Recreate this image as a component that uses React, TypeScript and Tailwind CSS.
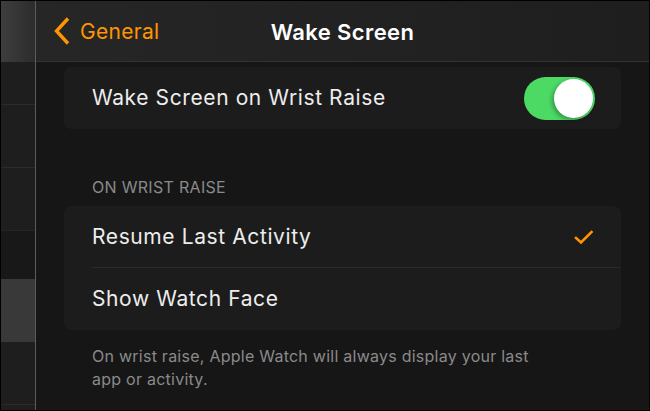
import React from "react";

function Toggle() {
    return (
        <div className="relative flex h-[43px] w-[71px] items-center justify-end rounded-full bg-[#4cd964] px-[2px]">
            <div className="h-[39px] w-[39px] rounded-full bg-white shadow-[-2px_2px_4px_rgba(0,0,0,0.3)]"/>
        </div>
    );
}

function Check() {
    return (
        <svg width="20" height="16" viewBox="0 0 20 16" fill="none">
            <path d="M2 9 L7 13.5 L17.5 3" stroke="#ff9500" strokeWidth="2.6" strokeLinecap="square"/>
        </svg>
    );
}

export default function App() {
    const sidebarRows = [
        "h-[43px] bg-[#1e1e1e] border-b border-[#2b2b2b]",
        "h-[63px] bg-[#1e1e1e] border-b border-[#2b2b2b]",
        "h-[63px] bg-[#1e1e1e] border-b border-[#252525]",
        "h-[48px] bg-[#181818]",
        "h-[63px] bg-[#393939]",
        "h-[63px] bg-[#1e1e1e] border-b border-[#2b2b2b]",
    ];

    return (
        <div className="h-[411px] w-[650px] bg-black pl-px pt-px" style={{fontFamily: "Inter, 'Open Sans', sans-serif"}}>
            <div className="flex h-[409px] w-[648px] overflow-hidden">
                <div className="flex w-[35px] flex-col border-r border-[#5c5c5c]">
                    <div className="h-[61px] bg-gradient-to-r from-[#3e3e3e] to-[#2c2c2c]"/>
                    {sidebarRows.map((c, i) => (
                        <div key={i} className={c}/>
                    ))}
                    <div className="flex-1 bg-[#1e1e1e]"/>
                </div>

                <div className="flex flex-1 flex-col bg-[#161616]">
                    <div className="relative flex h-[61px] items-center justify-center border-b border-[#333] bg-gradient-to-r from-[#262626] to-[#1e1e1e] pt-[3px]">
                        <div className="absolute left-[17px] top-0 flex h-full items-center gap-[9px] pt-[3px] text-[21px] tracking-[0.3px] text-[#ff9500]">
                            <svg width="18" height="30" viewBox="0 0 18 30" fill="none" className="-mt-[3px]">
                                <path d="M15 2.5 L3.5 15 L15 27.5" stroke="#ff9500" strokeWidth="3.4"/>
                            </svg>
                            <span className="pb-px">General</span>
                        </div>
                        <span className="text-[22px] font-semibold tracking-[0.4px] text-white">Wake Screen</span>
                    </div>

                    <div className="flex flex-col px-[28px] pt-[5px]">
                        <div className="flex h-[62px] items-center justify-between rounded-[7px] bg-[#1c1c1c] pl-[28px] pr-[26px]">
                            <span className="text-[21px] tracking-[0.6px] text-[#ededed]">Wake Screen on Wrist Raise</span>
                            <Toggle/>
                        </div>

                        <div className="pl-[28px] pt-[49px] pb-[10px] text-[16px] leading-[18px] tracking-[0.3px] text-[#8a8a8a]">ON WRIST RAISE</div>

                        <div className="flex flex-col rounded-[7px] bg-[#1c1c1c] pl-[28px]">
                            <div className="flex h-[62px] items-center justify-between border-b border-[#2a2a2a] pr-[27px]">
                                <span className="text-[21px] tracking-[0.6px] text-[#ededed]">Resume Last Activity</span>
                                <Check/>
                            </div>
                            <div className="flex h-[62px] items-center">
                                <span className="text-[21px] tracking-[0.6px] text-[#ededed]">Show Watch Face</span>
                            </div>
                        </div>

                        <p className="pl-[28px] pr-[40px] pt-[15px] text-[16px] leading-[23px] tracking-[0.25px] text-[#8a8a8a]">
                            On wrist raise, Apple Watch will always display your last<br/>app or activity.
                        </p>
                    </div>
                </div>
            </div>
        </div>
    );
}
